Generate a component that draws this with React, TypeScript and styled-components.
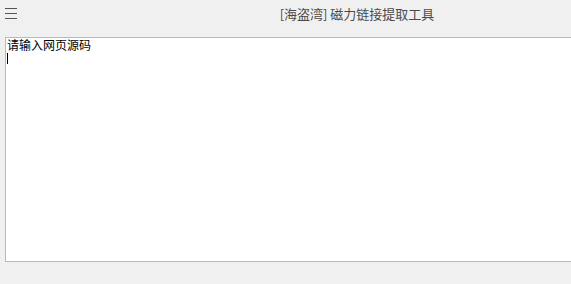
import React, { useState } from 'react';
import styled, { createGlobalStyle } from 'styled-components';

const GlobalStyle = createGlobalStyle`
  html, body {
    margin: 0;
    padding: 0;
    background: #f0f0f0;
    overflow: hidden;
  }
`;

const App = () => {
  const [source, setSource] = useState('请输入网页源码\n');
  const [focused, setFocused] = useState(false);

  return (
    <Window>
      <GlobalStyle />
      <TitleBar>
        <MenuButton aria-label="menu">
          <svg width="13" height="12" viewBox="0 0 13 12">
            <path d="M0 1.5h12M0 6.5h12M0 11.5h12" stroke="#555" strokeWidth="1" />
          </svg>
        </MenuButton>
        <Title>[海盗湾] 磁力链接提取工具</Title>
      </TitleBar>
      <Body>
        <InputWrap>
          <SourceInput
            value={source}
            onFocus={() => setFocused(true)}
            onBlur={() => setFocused(false)}
            onChange={(e) => setSource(e.target.value)}
          />
          {/* fake caret shown while the box isn't focused yet */}
          {!focused && <Caret />}
        </InputWrap>
      </Body>
    </Window>
  );
};

export default App;

const Window = styled.div`
  width: 571px;
  height: 284px;
  display: flex;
  flex-direction: column;
  background: #f0f0f0;
  font-family: 'Noto Sans CJK SC', 'Liberation Sans', sans-serif;
`;

const TitleBar = styled.div`
  height: 28px;
  display: flex;
  align-items: center;
  padding-left: 5px;
`;

const MenuButton = styled.div`
  display: flex;
  margin-top: -2px;
`;

const Title = styled.div`
  flex: 1;
  text-align: center;
  font-size: 13px;
  color: #4a4a4a;
  padding-left: 125px;
  margin-top: -1px;
`;

const Body = styled.div`
  padding: 9px 0 0 5px;
  display: flex;
`;

const InputWrap = styled.div`
  position: relative;
  display: flex;
`;

const SourceInput = styled.textarea`
  width: 580px;
  height: 225px;
  box-sizing: border-box;
  border: 1px solid #e6ab8c;
  border-right: none;
  background: #fff;
  resize: none;
  outline: none;
  padding: 0 1px;
  font-family: 'Noto Sans CJK SC', 'Liberation Sans', sans-serif;
  font-size: 12px;
  line-height: 14px;
  color: #000;
  caret-color: #000;
`;

const Caret = styled.span`
  position: absolute;
  left: 2px;
  top: 16px;
  width: 1px;
  height: 11px;
  background: #000;
  pointer-events: none;
`;
